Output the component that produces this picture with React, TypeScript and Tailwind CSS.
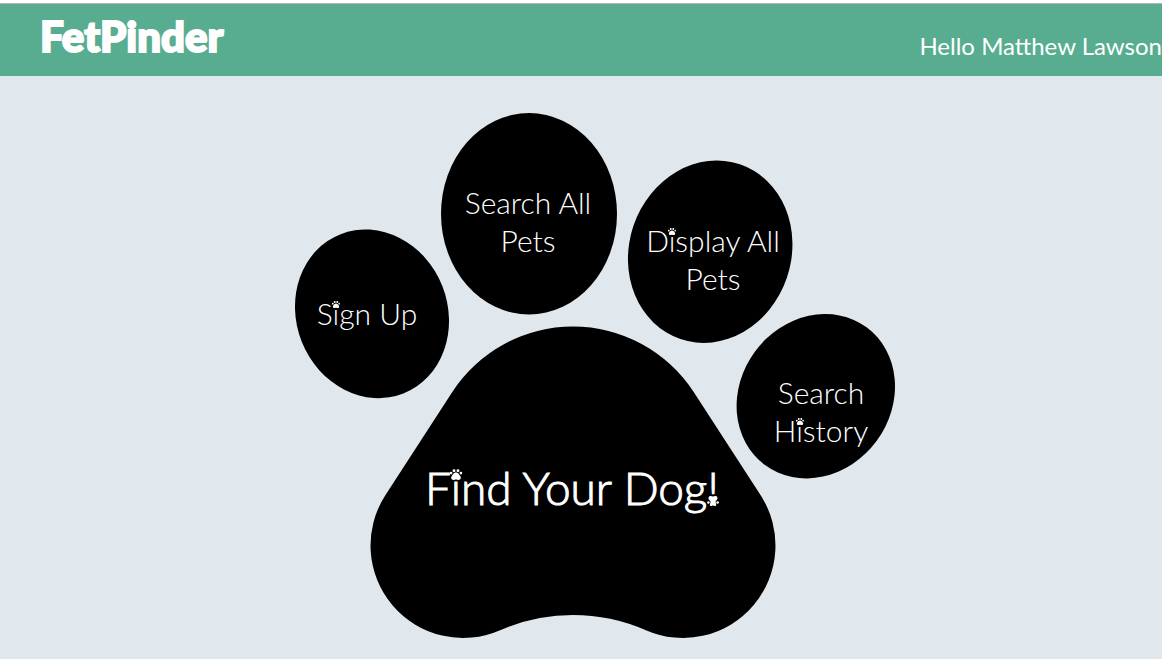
import React from "react";

function Paw({ className }: { className: string }) {
  return (
    <svg aria-hidden="true" viewBox="0 0 26 22" fill="currentColor" className={className}>
      <circle cx="3" cy="8" r="2.8" />
      <circle cx="9" cy="3.2" r="3" />
      <circle cx="17" cy="3.2" r="3" />
      <circle cx="23" cy="8" r="2.8" />
      <path d="M13 7.5 C17 7.5 19 11 21.5 14 C24.5 18 22 22 18 22 C16 22 15 21 13 21 C11 21 10 22 8 22 C4 22 1.500 18 4.500 14 C7 11 9 7.500 13 7.500 Z" />
    </svg>
  );
}

function PawI() {
  return (
    <span className="relative">
      i
      <Paw className="absolute left-1/2 top-[0.2em] h-[0.24em] w-[0.28em] -translate-x-1/2" />
    </span>
  );
}

function PawBang() {
  return (
    <span className="relative">
      !
      <Paw className="absolute bottom-[0.19em] left-1/2 h-[0.22em] w-[0.26em] -translate-x-1/2 rotate-180" />
    </span>
  );
}

const toeLabel =
  "absolute flex items-center justify-center text-center text-[30px] leading-[38px]";

function PawMenu() {
  return (
    <nav aria-label="Main menu" className="relative h-[525px] w-[628px] shrink-0 text-white">
      <svg aria-hidden="true" viewBox="267 113 628 525" className="block h-full w-full overflow-visible">
        <ellipse cx="372" cy="313.8" rx="75.6" ry="85.6" transform="rotate(-21.5 372 313.8)" />
        <ellipse cx="529" cy="213.8" rx="88" ry="100.7" />
        <ellipse cx="710.2" cy="251.7" rx="81" ry="92.3" transform="rotate(18.8 710.2 251.7)" />
        <ellipse cx="815.8" cy="396.2" rx="75.5" ry="85.6" transform="rotate(36.4 815.8 396.2)" />
        <path d="M573 326.5 A144 144 0 0 0 452.3 391.9 L385.5 495 A92.5 92.5 0 0 0 500.1 630.2 A182 182 0 0 1 645.9 630.2 A92.5 92.5 0 0 0 760.5 495 L693.7 391.9 A144 144 0 0 0 573 326.5 Z" />
      </svg>
      <a href="#sign-up" className={`${toeLabel} left-[30px] top-[128px] h-[144px] w-[140px]`}>
        <span>S<PawI />gn Up</span>
      </a>
      <a href="#search" className={`${toeLabel} left-[186px] top-[36px] h-[144px] w-[150px]`}>
        Search All<br />Pets
      </a>
      <a href="#pets" className={`${toeLabel} left-[370px] top-[74px] h-[144px] w-[152px]`}>
        <span>D<PawI />splay All<br />Pets</span>
      </a>
      <a href="#history" className={`${toeLabel} left-[484px] top-[226px] h-[144px] w-[140px]`}>
        <span>Search<br />H<PawI />story</span>
      </a>
      <a
        href="#find"
        className="absolute left-[135px] top-[300px] flex h-[150px] w-[340px] items-center justify-center text-[46px] leading-[58px] [-webkit-text-stroke:1px_white]"
      >
        <span>F<PawI />nd Your Dog<PawBang /></span>
      </a>
    </nav>
  );
}

export default function App() {
  return (
    <div className="flex min-h-screen flex-col bg-[#e0e7ed] font-['Lato',sans-serif] font-light">
      <div className="h-1 border-b border-[#b5b5b5] bg-white" />
      <header className="flex h-[72px] items-center justify-between bg-[#58ad90] pl-10 text-white">
        <a href="#home" className="pb-2 text-[42px] leading-[56px] font-black [-webkit-text-stroke:2px_white] [stroke-linejoin:round]">
          FetPinder
        </a>
        <p className="pt-3 text-[24px] leading-[34px] font-normal">Hello Matthew Lawson</p>
      </header>
      <main className="flex justify-center pt-[37px]">
        <PawMenu />
      </main>
    </div>
  );
}
